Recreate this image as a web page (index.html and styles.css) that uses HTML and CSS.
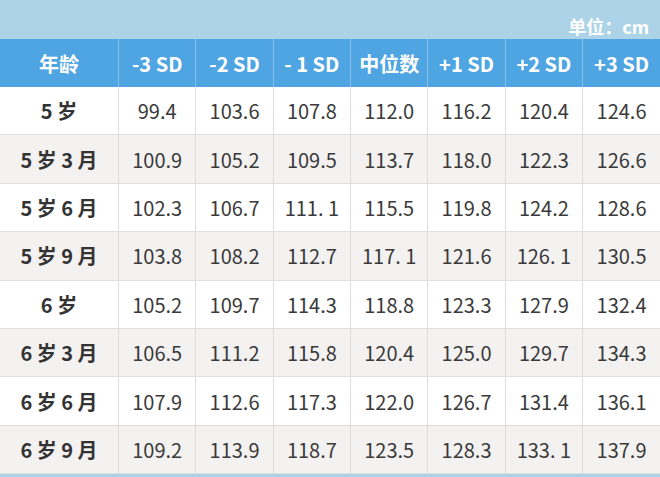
FILE: index.html
```html
<!DOCTYPE html>
<html lang="zh">
<head>
<meta charset="utf-8">
<link rel="stylesheet" href="styles.css">
</head>
<body>
<div class="page">
  <div class="topband"><span class="unit">单位：cm</span></div>
  <table class="grid">
    <thead>
      <tr><th class="age">年龄</th><th>-3 SD</th><th>-2 SD</th><th>- 1 SD</th><th>中位数</th><th>+1 SD</th><th>+2 SD</th><th>+3 SD</th></tr>
    </thead>
    <tbody>
      <tr><td class="age">5 岁</td><td>99.4</td><td>103.6</td><td>107.8</td><td>112.0</td><td>116.2</td><td>120.4</td><td>124.6</td></tr>
      <tr class="alt"><td class="age">5 岁 3 月</td><td>100.9</td><td>105.2</td><td>109.5</td><td>113.7</td><td>118.0</td><td>122.3</td><td>126.6</td></tr>
      <tr><td class="age">5 岁 6 月</td><td>102.3</td><td>106.7</td><td>111. 1</td><td>115.5</td><td>119.8</td><td>124.2</td><td>128.6</td></tr>
      <tr class="alt"><td class="age">5 岁 9 月</td><td>103.8</td><td>108.2</td><td>112.7</td><td>117. 1</td><td>121.6</td><td>126. 1</td><td>130.5</td></tr>
      <tr><td class="age">6 岁</td><td>105.2</td><td>109.7</td><td>114.3</td><td>118.8</td><td>123.3</td><td>127.9</td><td>132.4</td></tr>
      <tr class="alt"><td class="age">6 岁 3 月</td><td>106.5</td><td>111.2</td><td>115.8</td><td>120.4</td><td>125.0</td><td>129.7</td><td>134.3</td></tr>
      <tr><td class="age">6 岁 6 月</td><td>107.9</td><td>112.6</td><td>117.3</td><td>122.0</td><td>126.7</td><td>131.4</td><td>136.1</td></tr>
      <tr class="alt"><td class="age">6 岁 9 月</td><td>109.2</td><td>113.9</td><td>118.7</td><td>123.5</td><td>128.3</td><td>133. 1</td><td>137.9</td></tr>
    </tbody>
  </table>
  <div class="bottomband"></div>
</div>
</body>
</html>
```

FILE: styles.css
```css
html, body {
  margin: 0;
  padding: 0;
  background: #acd3e8;
}
.page {
  width: 660px;
  height: 477px;
  overflow: hidden;
  font-family: "Noto Sans CJK SC", "Noto Sans", sans-serif;
  background: #acd3e8;
}
.topband {
  height: 39px;
  display: flex;
  justify-content: flex-end;
  align-items: flex-end;
  padding-right: 11px;
  box-sizing: border-box;
}
.unit {
  color: #ffffff;
  font-weight: 700;
  font-size: 18px;
  line-height: 24px;
  margin-bottom: 1px;
}
.grid {
  width: 660px;
  border-collapse: collapse;
  table-layout: fixed;
}
.grid th, .grid td {
  text-align: center;
  padding: 0;
}
.grid th {
  height: 48px;
  background: #4fa4e2;
  color: #ffffff;
  font-weight: 700;
  font-size: 20px;
  border-left: 1px solid #86c1ec;
}
.grid th:first-child { border-left: none; }
.grid th.age { width: 118px; }
.grid td {
  height: 47.4px;
  background: #ffffff;
  color: #3a3a3a;
  font-size: 20px;
  border-left: 1px solid #dcdcdc;
  border-bottom: 1px solid #dedede;
}
.grid td:first-child { border-left: none; }
.grid tr.alt td { background: #f4f1f1; }
.grid td.age {
  font-weight: 700;
  color: #333333;
  font-size: 20px;
}
.bottomband {
  height: 4px;
}
```
